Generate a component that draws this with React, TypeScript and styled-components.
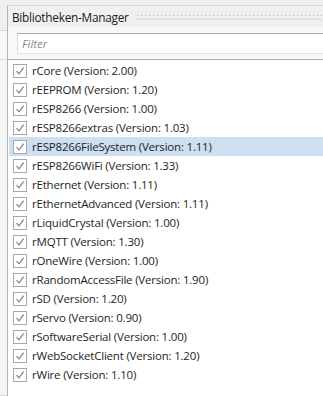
import React from 'react';
import styled, { createGlobalStyle } from 'styled-components';

const GlobalStyle = createGlobalStyle`
  html, body {
    margin: 0;
    padding: 0;
    background: #f0f0f0;
    overflow: hidden;
  }
`;

const libraries = [
  { name: 'rCore', version: '2.00' },
  { name: 'rEEPROM', version: '1.20' },
  { name: 'rESP8266', version: '1.00' },
  { name: 'rESP8266extras', version: '1.03' },
  { name: 'rESP8266FileSystem', version: '1.11' },
  { name: 'rESP8266WiFi', version: '1.33' },
  { name: 'rEthernet', version: '1.11' },
  { name: 'rEthernetAdvanced', version: '1.11' },
  { name: 'rLiquidCrystal', version: '1.00' },
  { name: 'rMQTT', version: '1.30' },
  { name: 'rOneWire', version: '1.00' },
  { name: 'rRandomAccessFile', version: '1.90' },
  { name: 'rSD', version: '1.20' },
  { name: 'rServo', version: '0.90' },
  { name: 'rSoftwareSerial', version: '1.00' },
  { name: 'rWebSocketClient', version: '1.20' },
  { name: 'rWire', version: '1.10' },
];

const Screen = styled.div`
  display: flex;
  width: 323px;
  height: 396px;
  font-family: 'Open Sans', 'Noto Sans', sans-serif;
`;

const SideStrip = styled.div`
  width: 7px;
  display: flex;
  flex-direction: column;
  background: #f3f3f3;
`;

const SideBlock = styled.div<{ $height?: number; $bg: string }>`
  height: ${(p) => (p.$height ? `${p.$height}px` : 'auto')};
  flex: ${(p) => (p.$height ? '0 0 auto' : '1')};
  background: ${(p) => p.$bg};
  border-bottom: 1px solid #d6d6d6;
`;

const Panel = styled.div`
  flex: 1;
  display: flex;
  flex-direction: column;
  margin-top: 5px;
  border-top: 1px solid #d9d9d9;
  border-left: 1px solid #b4b4b4;
  min-width: 0;
`;

const TitleBar = styled.div`
  height: 21px;
  display: flex;
  align-items: center;
  gap: 8px;
  padding-left: 4px;
  background: #f0f0f0;
`;

const Title = styled.span`
  font-size: 11.8px;
  color: #1a1a1a;
  white-space: nowrap;
  letter-spacing: -0.25px;
`;

const Grip = styled.div`
  flex: 1;
  height: 5px;
  margin-top: 1px;
  background-image: radial-gradient(circle at 0.5px 0.5px, #b2b2b2 0.8px, transparent 0.9px),
    radial-gradient(circle at 0.5px 0.5px, #b2b2b2 0.8px, transparent 0.9px);
  background-size: 4px 4px;
  background-position: 0 0, 2px 3px;
`;

const FilterBar = styled.div`
  background: #f8f8f8;
  padding: 6px 0 5px 9px;
  border-bottom: 1px solid #adadad;
`;

const FilterInput = styled.input`
  display: block;
  box-sizing: border-box;
  width: calc(100% + 4px);
  height: 21px;
  margin: 0;
  padding: 0 4px 1px;
  border: none;
  border-top: 1px solid #a9a9a9;
  border-left: 1px solid #dcdcdc;
  border-bottom: 1px solid #e4e4e4;
  background: #ffffff;
  font-family: inherit;
  font-size: 11.5px;
  outline: none;

  &::placeholder {
    color: #8c8c8c;
    font-style: italic;
  }
`;

const List = styled.div`
  flex: 1;
  background: #ffffff;
  padding: 1px 0 0 1px;
`;

const Row = styled.div<{ $selected?: boolean }>`
  height: 19px;
  display: flex;
  align-items: center;
  gap: 5px;
  padding-left: 4px;
  background: ${(p) => (p.$selected ? '#cddff0' : 'transparent')};
`;

const CheckBox = styled.span`
  box-sizing: border-box;
  width: 14px;
  height: 14px;
  border: 1px solid #a8a8a8;
  background: #ffffff;
  display: flex;
  align-items: center;
  justify-content: center;

  svg {
    width: 10px;
    height: 10px;
  }
`;

const Label = styled.span`
  font-size: 11.5px;
  color: #1e1e1e;
  white-space: nowrap;
  letter-spacing: -0.2px;
`;

const Check = () => (
  <svg viewBox="0 0 10 10">
    <path d="M1.5 5.2 L4 7.8 L8.6 1.6" fill="none" stroke="#808080" strokeWidth="1.2" />
  </svg>
);

export default function App() {
  return (
    <Screen>
      <GlobalStyle />
      <SideStrip>
        <SideBlock $height={30} $bg="#f0f0f0" />
        <SideBlock $height={28} $bg="#f7f7f7" />
        <SideBlock $bg="#f4f4f4" />
      </SideStrip>
      <Panel>
        <TitleBar>
          <Title>Bibliotheken-Manager</Title>
          <Grip />
        </TitleBar>
        <FilterBar>
          <FilterInput placeholder="Filter" />
        </FilterBar>
        <List>
          {libraries.map((lib) => (
            <Row key={lib.name} $selected={lib.name === 'rESP8266FileSystem'}>
              <CheckBox>
                <Check />
              </CheckBox>
              <Label>
                {lib.name} (Version: {lib.version})
              </Label>
            </Row>
          ))}
        </List>
      </Panel>
    </Screen>
  );
}
